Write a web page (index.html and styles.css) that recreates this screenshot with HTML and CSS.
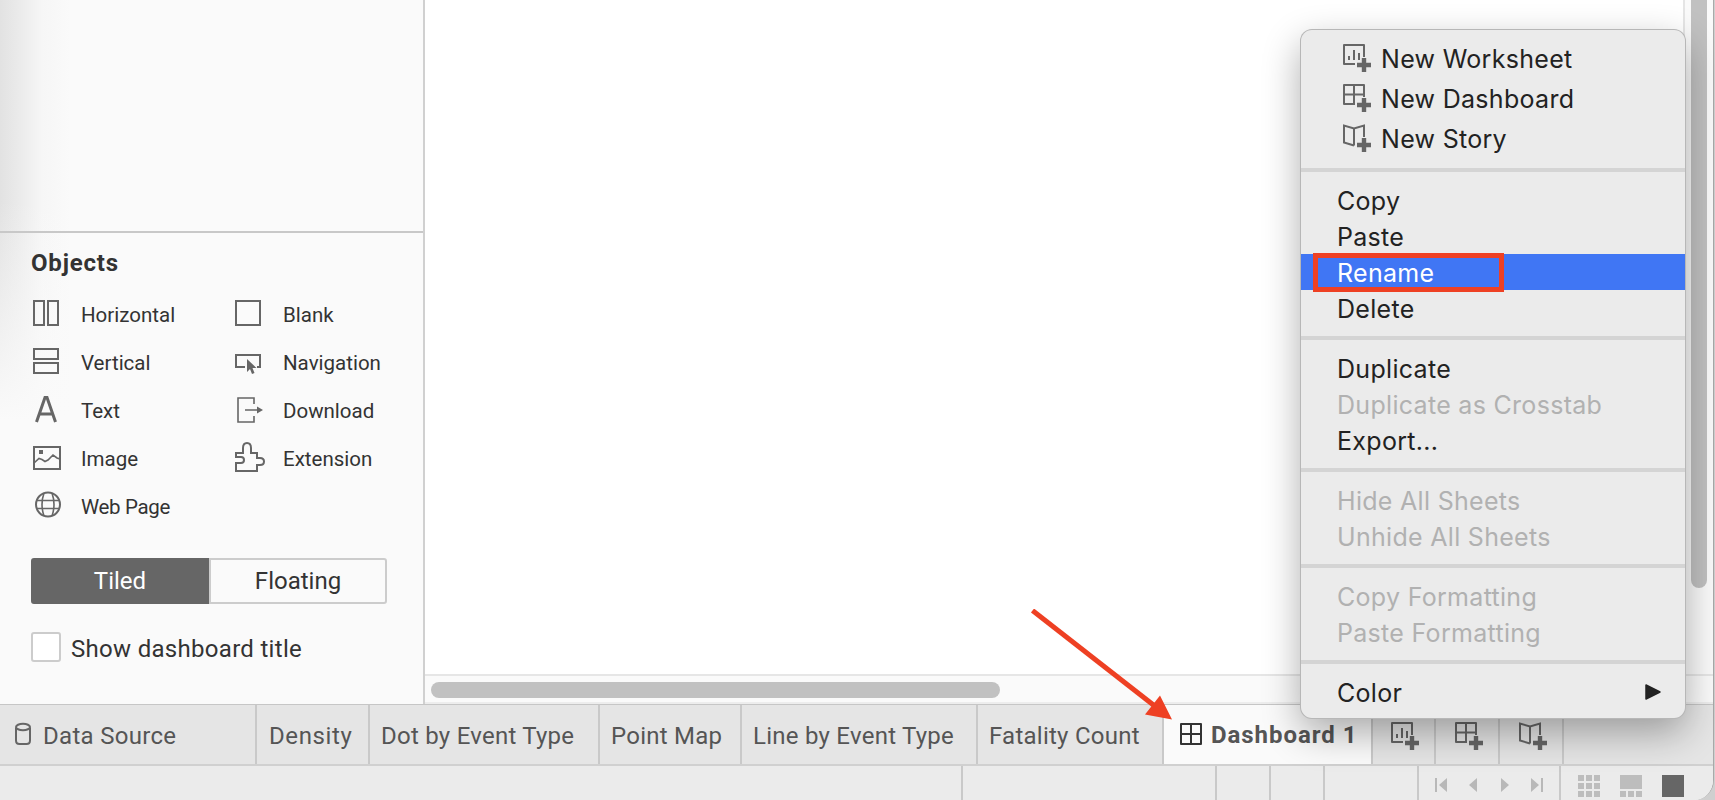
FILE: index.html
```
<!DOCTYPE html>
<html lang="en">
<head>
<meta charset="utf-8">
<title>Dashboard 1</title>
<link rel="stylesheet" href="styles.css">
</head>
<body>
<svg class="defs" width="0" height="0">
  <symbol id="new-sheet" viewBox="0 0 30 30"><path d="M13 21H2V2h20v12M7 17v-4m5 4V7m5 10v-7" fill="none" stroke="currentColor" stroke-width="2" stroke-linejoin="round"/><path d="M15 22h14M22 15v14" stroke="currentColor" stroke-width="4.4"/></symbol>
  <symbol id="new-dash" viewBox="0 0 30 30"><path d="M13 21H2V2h20v12M12 2v19M2 11.500h20" fill="none" stroke="currentColor" stroke-width="2" stroke-linejoin="round"/><path d="M15 22h14M22 15v14" stroke="currentColor" stroke-width="4.4"/></symbol>
  <symbol id="new-story" viewBox="0 0 30 30"><path d="M12 22.500L2 19.500V2.500l10 3L22 2.500V14M12 5.500v17" fill="none" stroke="currentColor" stroke-width="2"/><path d="M15 22h14M22 15v14" stroke="currentColor" stroke-width="4.4"/></symbol>
</svg>
<div class="window">
  <div class="workspace">
    <aside class="sidebar">
      <div class="upper"></div>
      <section class="objects">
        <h2>Objects</h2>
        <div class="grid">
          <div class="obj"><svg class="ico" viewBox="0 0 32 32"><path d="M3 4h10v24H3zM17 4h10v24H17z"/></svg><span>Horizontal</span></div>
          <div class="obj"><svg class="ico" viewBox="0 0 32 32"><path d="M3 4h24v24H3z"/></svg><span>Blank</span></div>
          <div class="obj"><svg class="ico" viewBox="0 0 32 32"><path d="M3 4h24v10H3zM3 18h24v10H3z"/></svg><span>Vertical</span></div>
          <div class="obj"><svg class="ico" viewBox="0 0 32 32"><path d="M12 22H3V10h24v12h-3"/><path class="solid" d="M14 14v13l3-3 2 5 2.500-1-2-5h4z"/></svg><span>Navigation</span></div>
          <div class="obj"><svg class="ico" viewBox="0 0 32 32"><path class="letter" d="M5.500 29L14 4.500h2L24.500 29M9 21h12"/></svg><span>Text</span></div>
          <div class="obj"><svg class="ico" viewBox="0 0 32 32"><path class="thin" d="M21 11V5H5v24h16v-6M12 17h14"/><path class="solid" d="M24 13.500l6 3.500-6 3.500z"/></svg><span>Download</span></div>
          <div class="obj"><svg class="ico" viewBox="0 0 32 32"><path d="M3 6h26v22H3z"/><path class="thin" d="M3 22l5-4.500 3 1 3 2 3-1.500 5-5 4 3 3 1"/><path class="solid" d="M8 9h4v4H8z"/></svg><span>Image</span></div>
          <div class="obj"><svg class="ico" viewBox="0 0 32 32"><path d="M3 12h7V7q0-5 4-5t4 5v5h6v5h3q4 0 4 3.500T27 24h-3v6H3v-8h5q3 0 3-3t-3-3H3z"/></svg><span>Extension</span></div>
          <div class="obj"><svg class="ico" viewBox="0 0 32 32"><circle cx="17" cy="15.500" r="12"/><path class="thin" d="M6 11.500h22M6 19.500h22M13 4q-4 11.500 0 23M21 4q4 11.500 0 23"/></svg><span class="tight">Web Page</span></div>
        </div>
        <div class="toggle"><div class="on">Tiled</div><div>Floating</div></div>
        <label class="check"><i></i><span>Show dashboard title</span></label>
      </section>
    </aside>
    <main class="canvas">
      <div class="sheet"></div>
      <div class="vbar"><i></i></div>
      <div class="hbar"><i></i></div>
    </main>
  </div>
  <nav class="tabs">
    <div class="tab source"><svg width="18" height="24" viewBox="0 0 18 24"><path d="M2 5.500v13q0 3.500 3.500 3.500h7q3.500 0 3.500-3.500v-13" fill="none" stroke="#666" stroke-width="2"/><ellipse cx="9" cy="5" rx="7" ry="3.200" fill="none" stroke="#666" stroke-width="2"/></svg><span>Data Source</span></div>
    <div class="tab w1"><span>Density</span></div>
    <div class="tab w2"><span>Dot by Event Type</span></div>
    <div class="tab w3"><span>Point Map</span></div>
    <div class="tab w4"><span>Line by Event Type</span></div>
    <div class="tab w5"><span>Fatality Count</span></div>
    <div class="tab active"><svg width="24" height="24" viewBox="0 0 24 24"><path d="M2 2h20v20H2zM12 2v20M2 12h20" fill="none" stroke="#333" stroke-width="2" stroke-linejoin="round"/></svg><span>Dashboard 1</span></div>
    <div class="tab new n1"><svg width="30" height="30"><use href="#new-sheet"/></svg></div>
    <div class="tab new"><svg width="30" height="30"><use href="#new-dash"/></svg></div>
    <div class="tab new"><svg width="30" height="30"><use href="#new-story"/></svg></div>
  </nav>
  <footer class="status">
    <div class="s1"></div><div class="s2"></div><div class="s3"></div><div class="s3"></div><div class="s4"></div>
    <div class="pager">
      <svg width="110" height="16" viewBox="0 0 110 16" fill="#b8b8b8"><path d="M0 1h2v14H0zM12 1v14L4 8zM42 1v14L34 8zM66 1v14l8-7zM96 1v14l8-7zM106 1h2v14h-2z"/></svg>
    </div>
    <div class="views">
      <svg width="22" height="22" fill="#bdbdbd"><path d="M0 0h6v6H0zM8 0h6v6H8zM16 0h6v6h-6zM0 8h6v6H0zM8 8h6v6H8zM16 8h6v6h-6zM0 16h6v6H0zM8 16h6v6H8zM16 16h6v6h-6z"/></svg>
      <svg width="22" height="22" fill="#bdbdbd"><path d="M0 0h22v14H0zM0 16h6v6H0zM8 16h6v6H8zM16 16h6v6h-6z"/></svg>
      <svg width="22" height="22" fill="#666"><path d="M0 0h22v22H0z"/></svg>
    </div>
  </footer>
</div>
<div class="menu">
  <div class="group">
    <div class="item big"><svg width="30" height="30"><use href="#new-sheet"/></svg><span>New Worksheet</span></div>
    <div class="item big"><svg width="30" height="30"><use href="#new-dash"/></svg><span>New Dashboard</span></div>
    <div class="item big"><svg width="30" height="30"><use href="#new-story"/></svg><span>New Story</span></div>
  </div>
  <div class="group">
    <div class="item">Copy</div><div class="item">Paste</div><div class="item selected">Rename<i class="callout"></i></div><div class="item">Delete</div>
  </div>
  <div class="group">
    <div class="item">Duplicate</div><div class="item off">Duplicate as Crosstab</div><div class="item">Export...</div>
  </div>
  <div class="group">
    <div class="item off">Hide All Sheets</div><div class="item off">Unhide All Sheets</div>
  </div>
  <div class="group">
    <div class="item off">Copy Formatting</div><div class="item off">Paste Formatting</div>
  </div>
  <div class="group">
    <div class="item sub"><span>Color</span><svg width="16" height="16" viewBox="0 0 16 16"><path d="M1 1v14l14-7z" fill="#222" stroke="#222" stroke-width="1.500" stroke-linejoin="round"/></svg></div>
  </div>
</div>
<svg class="arrow" width="145" height="115" viewBox="0 0 145 115"><path d="M2.500 1.500L126 98" stroke="#ee4023" stroke-width="5"/><path d="M142 110.500l-27-5 15-19z" fill="#ee4023"/></svg>
</body>
</html>
```
FILE: styles.css
```
* { box-sizing: border-box; }
body { margin: 0; width: 1715px; height: 800px; overflow: hidden; position: relative; background: #cfcfcf; font-family: Roboto, "Liberation Sans", sans-serif; color: #333; }
svg { display: block; flex: none; }
.defs { position: absolute; }
.window { width: 1714px; height: 800px; display: flex; flex-direction: column; background: #fafafa; border-right: 1px solid #a9a9a9; border-bottom-right-radius: 20px; overflow: hidden; }
.workspace { display: flex; height: 704px; }
.sidebar { width: 425px; border-right: 2px solid #d0d0d0; background: linear-gradient(to bottom, transparent 200px, #fafafa 420px), linear-gradient(to right, #e2e2e2, #ebebeb 20px, #f6f6f6 42px, #fafafa 70px); }
.upper { height: 233px; border-bottom: 2px solid #c8c8c8; }
.objects { padding: 15px 0 0 31px; }
h2 { margin: 0; font-size: 24px; line-height: 30px; font-weight: 700; letter-spacing: .8px; }
.grid { display: grid; grid-template-columns: 202px 190px; grid-auto-rows: 48px; margin-top: 11px; }
.obj { display: flex; align-items: center; gap: 18px; font-size: 20.5px; line-height: 26px; }
.obj span { padding-top: 3px; }
.obj .tight { letter-spacing: -.35px; }
.ico { width: 32px; height: 32px; fill: none; stroke: #666; stroke-width: 2; }
.ico .solid { fill: #666; stroke: none; }
.ico .thin { stroke-width: 1.600; }
.ico .letter { stroke-width: 3; }
.toggle { display: flex; width: 356px; height: 46px; margin-top: 29px; font-size: 24px; line-height: 43px; text-align: center; }
.toggle div { width: 178px; border: 2px solid #ccc; border-radius: 0 3px 3px 0; }
.toggle .on { background: #666; border-color: #666; color: #fff; border-radius: 3px 0 0 3px; }
.check { display: flex; align-items: center; height: 30px; margin-top: 28px; font-size: 24px; gap: 10px; letter-spacing: .3px; }
.check i { width: 30px; height: 30px; border: 2px solid #ccc; border-radius: 3px; background: #fff; }
.check span { padding-top: 4px; }
.canvas { width: 1288px; display: grid; grid-template-columns: 1258px 30px; grid-template-rows: 674px 30px; }
.sheet { background: #fff; }
.vbar { border-left: 2px solid #e5e5e5; padding-left: 6px; background: #fafafa; }
.vbar i { display: block; width: 16px; height: 588px; border-radius: 0 0 8px 8px; background: #c1c1c1; }
.hbar { grid-column: 1 / 3; border-top: 2px solid #e6e6e6; border-bottom: 2px solid #ededed; padding: 6px; }
.hbar i { display: block; width: 569px; height: 16px; border-radius: 8px; background: #c1c1c1; }
.tabs { display: flex; height: 62px; background: #e5e5e5; border-top: 1px solid #c6c6c6; border-bottom: 2px solid #d0d0d0; font-size: 24px; color: #555; letter-spacing: .25px; }
.tab { display: flex; align-items: center; border-right: 2px solid #c9c9c9; padding: 0 0 1px 11px; white-space: nowrap; }
.tab span { padding-top: 3px; }
.source { width: 257px; padding-left: 14px; gap: 11px; letter-spacing: .3px; }
.w1 { width: 113px; padding-left: 12px; letter-spacing: .6px; } .w2 { width: 230px; } .w3 { width: 142px; } .w4 { width: 236px; } .w5 { width: 186px; }
.active { width: 209px; background: #fafafa; font-weight: 700; padding-left: 15px; gap: 8px; letter-spacing: .95px; }
.active span { padding-top: 1px; }
.new { width: 64px; padding-left: 17px; padding-top: 3px; color: #666; }
.n1 { width: 63px; }
.n1 + .new { padding-left: 18px; }
.n1 + .new + .new { padding-left: 18px; }
.status { display: flex; height: 34px; background: #ebebeb; }
.status > div { border-right: 2px solid #c9c9c9; }
.s1 { width: 963px; } .s2 { width: 254px; } .s3 { width: 54px; } .s4 { width: 94px; }
.pager { width: 142px; padding: 11px 0 0 16px; }
.status > .views { display: flex; gap: 20px; padding: 9px 0 0 17px; border: 0; }
.menu { position: absolute; left: 1301px; top: 30px; width: 384px; height: 688px; padding-top: 8px; border-radius: 11px; background: #ebebeb; box-shadow: 0 0 0 1px #b7b7b7, 0 14px 38px rgba(0,0,0,.33); font: 25px/38px Inter, "Liberation Sans", sans-serif; color: #222; letter-spacing: .3px; }
.group + .group { border-top: 4px solid #d4d4d4; margin-top: 10px; padding-top: 10px; }
.item { height: 36px; padding-left: 36px; white-space: nowrap; }
.big { height: 40px; display: flex; align-items: center; gap: 9px; padding-left: 41px; }
.big svg { color: #666; }
.big span { padding-top: 2px; }
.selected { background: #4076f4; color: #fff; position: relative; }
.off { color: #b1b1b1; }
.sub { display: flex; align-items: center; justify-content: space-between; padding-right: 24px; }
.sub span { padding-top: 2px; }
.callout { position: absolute; left: 12px; top: -1px; width: 191px; height: 39px; border: 5px solid #ee4023; }
.arrow { position: absolute; left: 1029.5px; top: 609px; }
```
